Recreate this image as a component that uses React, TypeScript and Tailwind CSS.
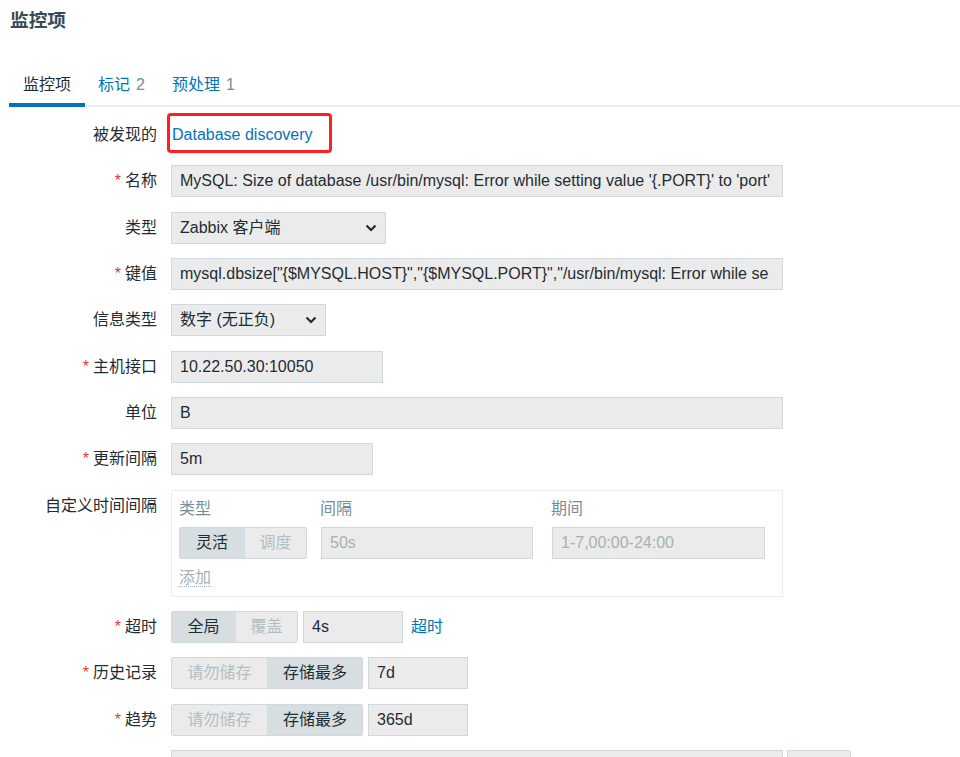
import React from 'react';

const FONT = { fontFamily: '"Liberation Sans", "Noto Sans CJK SC", sans-serif' };

const Label = ({ text, required }: { text: string; required?: boolean }) => (
  <div className="w-[147px] shrink-0 text-right leading-[20px] text-[#1f2c33]">
    {required && <span className="text-[#e33734] mr-[4px]">*</span>}
    {text}
  </div>
);

const Chevron = () => (
  <svg width="12" height="8" viewBox="0 0 12 8" className="shrink-0">
    <path d="M1.5 1.5 L6 6 L10.5 1.5" fill="none" stroke="#1f2c33" strokeWidth="2.2" />
  </svg>
);

const Field = ({ value, width, muted }: { value: string; width: string; muted?: boolean }) => (
  <div
    className={`${width} h-[32px] shrink-0 flex items-center px-[8px] bg-[#ebebeb] border border-[#cfd8dc] whitespace-nowrap overflow-hidden ${
      muted ? 'text-[#a7b1b6]' : 'text-[#1f2c33]'
    }`}
  >
    {value}
  </div>
);

const Select = ({ value, width }: { value: string; width: string }) => (
  <div
    className={`${width} h-[32px] flex items-center justify-between pl-[8px] pr-[8px] bg-[#ebebeb] border border-[#cfd8dc] text-[#1f2c33]`}
  >
    <span>{value}</span>
    <Chevron />
  </div>
);

interface Seg {
  text: string;
  w: string;
  active?: boolean;
}

const Segmented = ({ items }: { items: Seg[] }) => (
  <div className="flex h-[32px] shrink-0 border border-[#cfd8dc] rounded-[2px] overflow-hidden">
    {items.map((s, i) => (
      <div
        key={i}
        className={`${s.w} flex items-center justify-center ${
          s.active ? 'bg-[#d6dee2] text-[#1f2c33]' : 'bg-[#ebebeb] text-[#b3bec4]'
        } ${i > 0 ? 'border-l border-[#d6dee2]' : ''}`}
      >
        {s.text}
      </div>
    ))}
  </div>
);

const Row = ({ children }: { children: React.ReactNode }) => (
  <div className="flex items-center h-[32px]">{children}</div>
);

export default function App() {
  return (
    <div className="h-[757px] overflow-hidden bg-white text-[16px] pl-[10px]" style={FONT}>
      {/* Header */}
      <h1 className="h-[42px] flex items-center text-[18.7px] font-bold text-[#384a55]">监控项</h1>

      {/* Tabs */}
      <div className="mt-[25px] flex border-b-2 border-[#ebeef0] -ml-[1px]">
        <div className="px-[14px] pt-[8px] pb-[6px] leading-[20px] border-b-4 border-[#0275b8] -mb-[2px] text-[#1f2c33]">
          监控项
        </div>
        <div className="px-[13px] pt-[8px] pb-[10px] leading-[20px] text-[#0275b8]">
          标记<span className="ml-[6px] text-[#768d99]">2</span>
        </div>
        <div className="pl-[14px] pr-[13px] pt-[8px] pb-[10px] leading-[20px] text-[#0275b8]">
          预处理<span className="ml-[6px] text-[#768d99]">1</span>
        </div>
      </div>

      {/* Form */}
      <div className="mt-[12px] flex flex-col gap-[14.33px]">
        <Row>
          <Label text="被发现的" />
          <div className="ml-[14px] relative">
            <span className="ml-[1px] text-[#0275b8]">Database discovery</span>
            <div className="absolute -left-[4px] -top-[10px] w-[165px] h-[40px] border-[3px] border-[#ff1f1f] rounded-[4px]" />
          </div>
        </Row>

        <Row>
          <Label text="名称" required />
          <div className="ml-[14px]">
            <Field
              width="w-[612px]"
              value="MySQL: Size of database /usr/bin/mysql: Error while setting value '{.PORT}' to 'port'"
            />
          </div>
        </Row>

        <Row>
          <Label text="类型" />
          <div className="ml-[14px]">
            <Select width="w-[215px]" value="Zabbix 客户端" />
          </div>
        </Row>

        <Row>
          <Label text="键值" required />
          <div className="ml-[14px]">
            <Field
              width="w-[612px]"
              value={'mysql.dbsize["{$MYSQL.HOST}","{$MYSQL.PORT}","/usr/bin/mysql: Error while se'}
            />
          </div>
        </Row>

        <Row>
          <Label text="信息类型" />
          <div className="ml-[14px]">
            <Select width="w-[155px]" value="数字 (无正负)" />
          </div>
        </Row>

        <Row>
          <Label text="主机接口" required />
          <div className="ml-[14px]">
            <Field width="w-[212px]" value="10.22.50.30:10050" />
          </div>
        </Row>

        <Row>
          <Label text="单位" />
          <div className="ml-[14px]">
            <Field width="w-[612px]" value="B" />
          </div>
        </Row>

        <Row>
          <Label text="更新间隔" required />
          <div className="ml-[14px]">
            <Field width="w-[202px]" value="5m" />
          </div>
        </Row>

        {/* Custom intervals */}
        <div className="flex items-start">
          <div className="pt-[6px]">
            <Label text="自定义时间间隔" />
          </div>
          <div className="ml-[14px] w-[612px] h-[107px] border border-[#ebeef0] pl-[7px] pt-[8px]">
            <div className="flex leading-[20px] text-[#768d99]">
              <div className="w-[141px]">类型</div>
              <div className="w-[231px]">间隔</div>
              <div>期间</div>
            </div>
            <div className="flex mt-[8px]">
              <Segmented
                items={[
                  { text: '灵活', w: 'w-[64px]', active: true },
                  { text: '调度', w: 'w-[62px]' },
                ]}
              />
              <div className="ml-[14px]">
                <Field width="w-[212px]" value="50s" muted />
              </div>
              <div className="ml-[19px]">
                <Field width="w-[213px]" value="1-7,00:00-24:00" muted />
              </div>
            </div>
            <div className="mt-[9px] leading-[20px]">
              <span className="text-[#a7b1b6] border-b border-dotted border-[#a7b1b6]">添加</span>
            </div>
          </div>
        </div>

        <Row>
          <Label text="超时" required />
          <div className="ml-[14px] flex items-center">
            <Segmented
              items={[
                { text: '全局', w: 'w-[63px]', active: true },
                { text: '覆盖', w: 'w-[62px]' },
              ]}
            />
            <div className="ml-[5px]">
              <Field width="w-[100px]" value="4s" />
            </div>
            <span className="ml-[8px] text-[#0275b8]">超时</span>
          </div>
        </Row>

        <Row>
          <Label text="历史记录" required />
          <div className="ml-[14px] flex items-center">
            <Segmented
              items={[
                { text: '请勿储存', w: 'w-[95px]' },
                { text: '存储最多', w: 'w-[95px]', active: true },
              ]}
            />
            <div className="ml-[5px]">
              <Field width="w-[100px]" value="7d" />
            </div>
          </div>
        </Row>

        <Row>
          <Label text="趋势" required />
          <div className="ml-[14px] flex items-center">
            <Segmented
              items={[
                { text: '请勿储存', w: 'w-[95px]' },
                { text: '存储最多', w: 'w-[95px]', active: true },
              ]}
            />
            <div className="ml-[5px]">
              <Field width="w-[100px]" value="365d" />
            </div>
          </div>
        </Row>

        <Row>
          <Label text="" />
          <div className="ml-[14px] flex items-center">
            <Field width="w-[612px]" value="" />
            <div className="ml-[4px] w-[64px] h-[32px] bg-[#ebebeb] border border-[#cfd8dc] rounded-[2px]" />
          </div>
        </Row>
      </div>
    </div>
  );
}
